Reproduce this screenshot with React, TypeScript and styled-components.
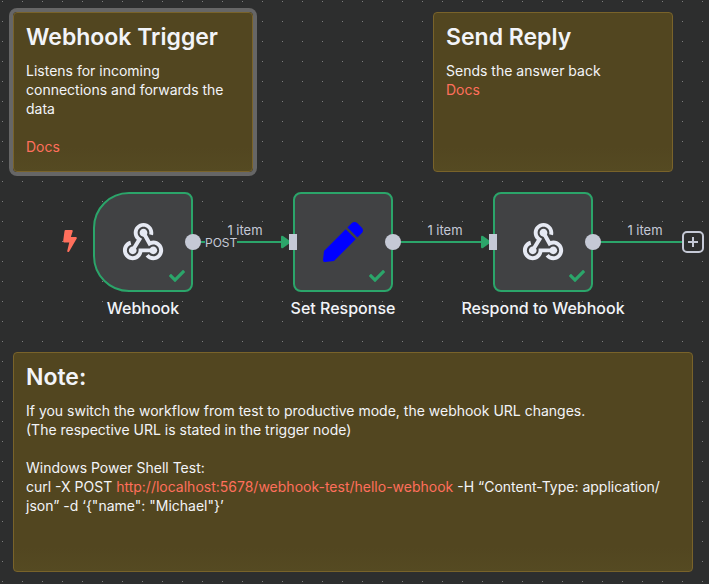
import React from "react";
import styled, { createGlobalStyle } from "styled-components";
import { FaBolt, FaCheck, FaPen } from "react-icons/fa";

const colors = {
  canvas: "#2d2e2e",
  dot: "#7c7d7d",
  sticky: "#524620",
  stickyEnd: "#554a22",
  stickyBorder: "#79632a",
  selection: "#666666",
  node: "#414244",
  success: "#2ba56a",
  handle: "#c5c9d6",
  icon: "#e6e9f3",
  text: "#f2f4f8",
  accent: "#ff6f5c",
};

const GlobalStyle = createGlobalStyle`
  *, *::before, *::after { box-sizing: border-box; }
  body {
    margin: 0;
    background: ${colors.canvas};
    font-family: Inter, "Open Sans", sans-serif;
    color: ${colors.text};
  }
`;

const Canvas = styled.main`
  display: flex;
  flex-direction: column;
  min-height: 100vh;
  padding: 12px 0;
  overflow: hidden;
  background-color: ${colors.canvas};
  background-image: conic-gradient(
    from 0deg at 1px 1px,
    transparent 0 270deg,
    ${colors.dot} 270deg 360deg
  );
  background-size: 20px 20px;
  background-position: 2px 1px;
`;

const StickyRow = styled.div`
  display: flex;
  gap: 180px;
  padding: 0 16px 0 13px;
`;

const Sticky = styled.article<{ $wide?: boolean; $selected?: boolean }>`
  flex: ${({ $wide }) => ($wide ? "1 1 0" : "0 0 240px")};
  min-height: ${({ $wide }) => ($wide ? 220 : 160)}px;
  padding: 10px 12px;
  border: 1px solid ${colors.stickyBorder};
  border-radius: 4px;
  background: linear-gradient(
    ${colors.sticky} calc(100% - 24px),
    ${colors.stickyEnd}
  );
  box-shadow: ${({ $selected }) =>
    $selected ? `0 0 0 4px ${colors.selection}` : "none"};
`;

const StickyTitle = styled.h2`
  margin: 0 0 10px;
  font-size: 23px;
  line-height: 28px;
  font-weight: 600;
`;

const StickyText = styled.p`
  margin: 0;
  font-size: 14px;
  line-height: 19px;

  & + & {
    margin-top: 19px;
  }
`;

const StickyLink = styled.a`
  color: ${colors.accent};
  text-decoration: none;
`;

const Pipeline = styled.div`
  display: flex;
  align-items: flex-start;
  margin: 20px 0 33px;
  padding: 0 5px 0 93px;
`;

const NodeRoot = styled.section`
  display: flex;
  flex: none;
  flex-direction: column;
  align-items: center;
  width: 100px;
`;

const NodeBody = styled.div<{ $trigger?: boolean }>`
  position: relative;
  z-index: 1;
  display: flex;
  align-items: center;
  justify-content: center;
  width: 100px;
  height: 100px;
  border: 2px solid ${colors.success};
  border-radius: ${({ $trigger }) => ($trigger ? "36px 8px 8px 36px" : "8px")};
  background: ${colors.node};
`;

const NodeLabel = styled.h3`
  margin: 5px 0 0;
  font-size: 16px;
  line-height: 22px;
  font-weight: 500;
  white-space: nowrap;
`;

const OutputHandle = styled.span`
  position: absolute;
  right: -10px;
  top: 40px;
  width: 16px;
  height: 16px;
  border-radius: 50%;
  background: ${colors.handle};
`;

const InputHandle = styled.span`
  position: absolute;
  left: -6px;
  top: 40px;
  width: 8px;
  height: 16px;
  background: ${colors.handle};
`;

const StatusIcon = styled(FaCheck)`
  position: absolute;
  right: 6px;
  bottom: 6px;
  font-size: 16px;
  color: ${colors.success};
`;

const TriggerIcon = styled(FaBolt)`
  position: absolute;
  right: 110px;
  top: 36px;
  font-size: 22px;
  color: ${colors.accent};
`;

const PenIcon = styled(FaPen)`
  font-size: 40px;
  color: #0000ff;
`;

const HookSvg = styled.svg`
  width: 47px;
  height: 47px;
  fill: ${colors.icon};
`;

const Edge = styled.div<{ $open?: boolean }>`
  position: relative;
  display: flex;
  flex: ${({ $open }) => ($open ? "1 1 0" : "0 0 100px")};
  align-items: center;
  height: 100px;
  padding-left: 8px;
`;

const EdgeLine = styled.span<{ $short?: boolean }>`
  flex: ${({ $short }) => ($short ? "0 0 4px" : "1 1 0")};
  height: 2px;
  background: ${colors.success};
`;

const ArrowSvg = styled.svg`
  flex: none;
  width: 10px;
  height: 14px;
  margin-right: 2px;
  fill: ${colors.success};
`;

const PortLabel = styled.span`
  padding-top: 1px;
  color: ${colors.handle};
  font-size: 12px;
  line-height: 16px;
`;

const EdgeLabel = styled.span`
  position: absolute;
  left: 8px;
  bottom: 53px;
  width: 88px;
  text-align: center;
  color: ${colors.handle};
  font-size: 13px;
  line-height: 18px;
`;

const AddButton = styled.button`
  display: flex;
  flex: none;
  align-items: center;
  justify-content: center;
  width: 22px;
  height: 22px;
  padding: 0;
  border: 2px solid ${colors.handle};
  border-radius: 5px;
  background: ${colors.canvas};
  cursor: pointer;
`;

const PlusSvg = styled.svg`
  width: 10px;
  height: 10px;
  fill: ${colors.handle};
`;

function WebhookIcon() {
  return (
    <HookSvg viewBox="1 1 48 48" aria-hidden="true">
      <path d="M35 37c-2.2 0-4-1.8-4-4s1.8-4 4-4 4 1.8 4 4-1.8 4-4 4" />
      <path d="M35 43c-3 0-5.9-1.4-7.8-3.7l3.1-2.5c1.1 1.4 2.9 2.3 4.7 2.3 3.3 0 6-2.7 6-6s-2.7-6-6-6c-1 0-2 .3-2.9.7l-1.7 1L23.3 16l3.5-1.9 5.3 9.4c1-.3 2-.5 3-.5 5.5 0 10 4.5 10 10s-4.6 10-10.1 10" />
      <path d="M14 43C8.5 43 4 38.5 4 33c0-4.6 3.1-8.5 7.5-9.7l1 3.9C9.9 27.9 8 30.3 8 33c0 3.3 2.7 6 6 6s6-2.7 6-6v-2h15v4H23.8c-.9 4.6-5 8-9.8 8" />
      <path d="M14 37c-2.2 0-4-1.8-4-4s1.8-4 4-4 4 1.8 4 4-1.8 4-4 4M25 19c-2.2 0-4-1.8-4-4s1.8-4 4-4 4 1.8 4 4-1.8 4-4 4" />
      <path d="M15.7 34l-3.4-2 5.9-9.7c-2-1.9-3.2-4.5-3.2-7.3 0-5.5 4.5-10 10-10s10 4.5 10 10c0 .9-.1 1.7-.3 2.5l-3.9-1c.1-.5.2-1 .2-1.5 0-3.3-2.7-6-6-6s-6 2.7-6 6c0 2.1 1.1 4 2.9 5.1l1.7 1z" />
    </HookSvg>
  );
}

interface WorkflowNodeProps {
  name: string;
  trigger?: boolean;
  icon: React.ReactNode;
}

function WorkflowNode({ name, trigger, icon }: WorkflowNodeProps) {
  return (
    <NodeRoot>
      <NodeBody $trigger={trigger}>
        {trigger ? <TriggerIcon aria-hidden="true" /> : <InputHandle />}
        {icon}
        <OutputHandle />
        <StatusIcon aria-hidden="true" />
      </NodeBody>
      <NodeLabel>{name}</NodeLabel>
    </NodeRoot>
  );
}

interface ConnectionProps {
  port?: string;
  open?: boolean;
}

function Connection({ port, open }: ConnectionProps) {
  return (
    <Edge $open={open}>
      {port && (
        <>
          <EdgeLine $short />
          <PortLabel>{port}</PortLabel>
        </>
      )}
      <EdgeLine />
      {open ? (
        <AddButton type="button" aria-label="Add node">
          <PlusSvg viewBox="0 0 10 10" aria-hidden="true">
            <path d="M4 0h2v4h4v2H6v4H4V6H0V4h4z" />
          </PlusSvg>
        </AddButton>
      ) : (
        <ArrowSvg viewBox="0 0 10 14" aria-hidden="true">
          <path d="M0 2Q0 0 2 1L9 6Q10 7 9 8L2 13Q0 14 0 12Z" />
        </ArrowSvg>
      )}
      <EdgeLabel>1 item</EdgeLabel>
    </Edge>
  );
}

export default function App() {
  return (
    <>
      <GlobalStyle />
      <Canvas>
        <StickyRow>
          <Sticky $selected>
            <StickyTitle>Webhook Trigger</StickyTitle>
            <StickyText>
              Listens for incoming connections and forwards the data
            </StickyText>
            <StickyText>
              <StickyLink href="#webhook-docs">Docs</StickyLink>
            </StickyText>
          </Sticky>
          <Sticky>
            <StickyTitle>Send Reply</StickyTitle>
            <StickyText>
              Sends the answer back
              <br />
              <StickyLink href="#respond-docs">Docs</StickyLink>
            </StickyText>
          </Sticky>
        </StickyRow>

        <Pipeline>
          <WorkflowNode name="Webhook" trigger icon={<WebhookIcon />} />
          <Connection port="POST" />
          <WorkflowNode name="Set Response" icon={<PenIcon aria-hidden="true" />} />
          <Connection />
          <WorkflowNode name="Respond to Webhook" icon={<WebhookIcon />} />
          <Connection open />
        </Pipeline>

        <StickyRow>
          <Sticky $wide>
            <StickyTitle>Note:</StickyTitle>
            <StickyText>
              If you switch the workflow from test to productive mode, the webhook URL changes.
              <br />
              (The respective URL is stated in the trigger node)
            </StickyText>
            <StickyText>
              Windows Power Shell Test:
              <br />
              curl -X POST{" "}
              <StickyLink href="http://localhost:5678/webhook-test/hello-webhook">
                http://localhost:5678/webhook-test/hello-webhook
              </StickyLink>{" "}
              -H “Content-Type: application/<wbr />json” -d ‘{"{\"name\": \"Michael\"}"}’
            </StickyText>
          </Sticky>
        </StickyRow>
      </Canvas>
    </>
  );
}
